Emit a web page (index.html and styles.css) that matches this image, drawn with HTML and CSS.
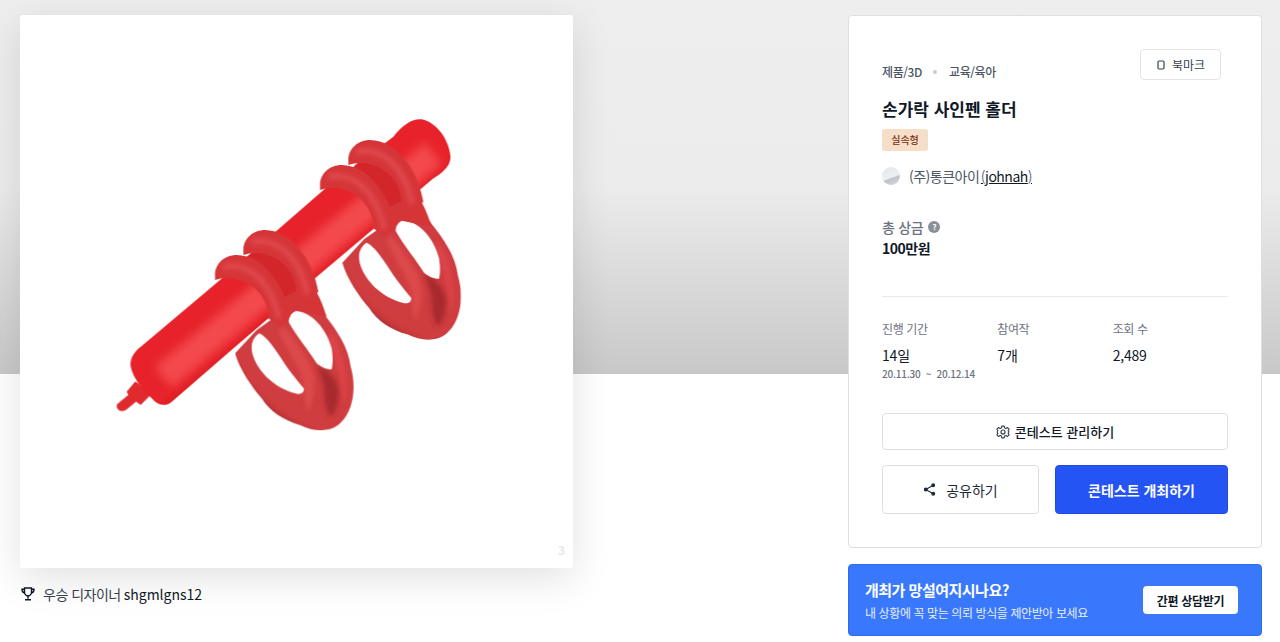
FILE: index.html
```html
<!DOCTYPE html>
<html lang="ko">
<head>
  <meta charset="UTF-8">
  <meta name="viewport" content="width=device-width, initial-scale=1.0">
  <title>손가락 사인펜 홀더</title>
  <link rel="stylesheet" href="styles.css">
</head>
<body>
  <div class="hero-bg"></div>

  <div class="container">
    <div class="left-col">
      <div class="cover">
        <svg class="cover-img" viewBox="0 0 553 553">
          <defs>
            <filter id="photo"><feGaussianBlur stdDeviation="1.2"/></filter>
            <filter id="soft"><feGaussianBlur stdDeviation="6"/></filter>
            <filter id="glow" x="-20%" y="-20%" width="140%" height="140%"><feGaussianBlur stdDeviation="14"/></filter>
            <clipPath id="loop-clip">
              <path clip-rule="evenodd" d="M540 640 C570 590 640 590 670 640 C710 690 745 740 752 800 C770 860 760 930 725 965 C700 995 650 1000 600 975 C550 960 510 935 485 895 C455 860 420 810 405 760 L470 690 Z M478 700 C500 710 520 740 540 770 C565 810 590 840 612 866 C612 880 600 885 585 880 C530 865 480 825 460 770 C450 740 455 715 478 700 Z M590 632 C640 640 680 690 695 745 C700 775 698 795 695 808 C675 808 662 800 650 790 C625 750 590 710 565 665 C565 650 575 635 590 632 Z"/>
            </clipPath>
            <clipPath id="barrel-clip">
              <path d="M92 800 C88 775 105 752 125 738 L360 540 L680 262 L880 110 C905 78 935 55 965 58 C1010 68 1045 115 1052 170 C1050 200 1030 215 1000 235 L650 530 L400 745 L215 905 C195 920 175 918 155 895 C125 865 100 835 92 800 Z"/>
            </clipPath>
            <g id="loop">
              <g clip-path="url(#loop-clip)">
                <rect x="380" y="580" width="400" height="430" fill="#cf3c3f"/>
                <path fill="#b23034" filter="url(#soft)" d="M400 770 C440 860 520 950 660 1000 L560 1000 L400 880 Z"/>
                <path fill="#dd484b" filter="url(#soft)" d="M555 680 C590 730 630 780 640 820 C650 860 640 900 625 935 C605 900 620 860 600 815 C575 770 550 730 535 690 Z"/>
                <path fill="#de4548" filter="url(#soft)" d="M690 690 C730 750 745 830 735 920 C725 860 715 780 680 720 Z"/>
                <path fill="#a82a2e" filter="url(#soft)" d="M650 795 C685 808 712 838 716 870 C718 910 705 945 690 950 C674 930 674 885 670 850 Z"/>
              </g>
            </g>
            <path id="ring" d="M345 525 C345 490 375 465 410 465 C450 465 490 490 515 525 C545 560 560 600 570 650 L540 680 L505 655 C505 610 480 570 440 548 C410 532 370 530 345 540 Z"/>
            <g id="rings">
              <path fill="none" stroke="#d3282c" stroke-width="70" d="M475 445 L585 578"/>
              <use href="#ring" fill="#d63639"/>
              <path fill="#d63639" d="M505 640 C525 600 600 560 640 560 C660 590 670 620 680 650 L590 632 C575 635 565 650 565 670 L540 660 Z"/>
              <use href="#ring" fill="#d63639" transform="translate(85 -75)"/>
              <path fill="none" stroke="#e04a4d" stroke-width="16" stroke-linecap="round" filter="url(#soft)" d="M375 500 C420 490 465 515 495 555 C515 585 530 620 535 650"/>
              <path fill="none" stroke="#e04a4d" stroke-width="16" stroke-linecap="round" filter="url(#soft)" d="M460 425 C505 415 550 440 580 480 C600 510 615 545 620 575"/>
            </g>
          </defs>
          <g transform="translate(80 85) scale(.33333)" filter="url(#photo)">
            <use href="#loop" transform="translate(322 -272)"/>
            <use href="#loop"/>

            <path fill="#e02a2e" d="M105 845 C120 850 140 870 152 885 L122 915 L108 905 L78 930 C60 940 45 925 52 912 L85 885 L80 875 Z"/>
            <g clip-path="url(#barrel-clip)">
              <rect x="60" y="30" width="1020" height="920" fill="#e7232a"/>
              <path fill="none" stroke="#f3494d" stroke-width="80" filter="url(#glow)" d="M190 832 L1000 160"/>
              <path fill="none" stroke="#d92226" stroke-width="14" filter="url(#soft)" d="M200 915 L1040 215"/>
            </g>

            <use href="#rings"/>
            <use href="#rings" transform="translate(315 -270)"/>
          </g>
        </svg>
        <span class="watermark">3</span>
      </div>
      <div class="winner">
        <svg class="trophy" viewBox="0 0 14 14" fill="none" stroke="#111827" stroke-width="1.4">
          <path d="M3.5 1h7v4.2a3.5 3.5 0 0 1-7 0z"/>
          <path d="M3.5 2.200H1c0 2.400 1 3.600 2.800 3.900M10.500 2.200H13c0 2.400-1 3.600-2.800 3.900M7 8.700v3M4 12.800h6"/>
        </svg>
        <span class="winner-label">우승 디자이너</span>
        <span class="winner-name">shgmlgns12</span>
      </div>
    </div>

    <div class="right-col">
      <div class="info-card">
        <div class="card-top">
          <div class="category">
            <span>제품/3D</span>
            <i class="dot"></i>
            <span>교육/육아</span>
          </div>
          <button class="bookmark-btn">
            <svg class="bookmark-icon" viewBox="0 0 10 10" fill="none" stroke="#374151" stroke-width="1.2">
              <path d="M2 2.200C2 1.300 2.600 1 3.200 1h3.600C7.500 1 8 1.300 8 2.200v5.600C8 8.700 7.500 9 6.800 9H3.200C2.500 9 2 8.700 2 7.800z"/>
            </svg>
            북마크
          </button>
        </div>

        <h1 class="title">손가락 사인펜 홀더</h1>
        <span class="badge">실속형</span>

        <div class="host">
          <span class="avatar"></span>
          <span>(주)통큰아이 <a class="host-link" href="#">(<span class="host-id">johnah</span>)</a></span>
        </div>

        <div class="prize">
          <div class="prize-label">총 상금 <span class="help">?</span></div>
          <div class="prize-value">100만원</div>
        </div>

        <div class="stats">
          <div class="stat">
            <div class="stat-label">진행 기간</div>
            <div class="stat-value">14일</div>
            <div class="stat-date">20.11.30 &nbsp;~&nbsp; 20.12.14</div>
          </div>
          <div class="stat">
            <div class="stat-label">참여작</div>
            <div class="stat-value">7개</div>
          </div>
          <div class="stat">
            <div class="stat-label">조회 수</div>
            <div class="stat-value">2,489</div>
          </div>
        </div>

        <button class="btn btn-manage">
          <svg class="gear" viewBox="0 0 24 24" fill="none" stroke="#374151" stroke-width="2">
            <circle cx="12" cy="12" r="3.500"/>
            <path d="M10 2h4l.7 3 2.300 1 2.700-1.600 2.800 2.800L20.900 9.900l1 2.100-1 2.100 1.600 2.700-2.800 2.800-2.700-1.600-2.300 1-.7 3h-4l-.7-3-2.300-1-2.700 1.600-2.800-2.800 1.600-2.700-1-2.100 1-2.100-1.600-2.700 2.800-2.800L7 6l2.300-1z" stroke-linejoin="round"/>
          </svg>
          콘테스트 관리하기
        </button>

        <div class="btn-row">
          <button class="btn btn-share">
            <svg class="share" viewBox="0 0 14 14" fill="#1f2937" stroke="#1f2937" stroke-width="1.2">
              <circle cx="11" cy="2.500" r="1.500"/>
              <circle cx="3" cy="7" r="1.500"/>
              <circle cx="11" cy="11.500" r="1.500"/>
              <path d="M11 2.500 3 7l8 4.500" fill="none"/>
            </svg>
            공유하기
          </button>
          <button class="btn btn-host">콘테스트 개최하기</button>
        </div>
      </div>

      <div class="consult">
        <div>
          <div class="consult-title">개최가 망설여지시나요?</div>
          <div class="consult-sub">내 상황에 꼭 맞는 의뢰 방식을 제안받아 보세요</div>
        </div>
        <button class="consult-btn">간편 상담받기</button>
      </div>
    </div>
  </div>
</body>
</html>
```

FILE: styles.css
```css
* {
  box-sizing: border-box;
}

html, body {
  height: 100%;
  overflow: hidden;
}

body {
  margin: 0;
  background: #ffffff;
  color: #111827;
  font-family: "Noto Sans CJK KR", "Noto Sans", sans-serif;
  font-size: 13px;
}

.hero-bg {
  position: absolute;
  top: 0;
  left: 0;
  width: 100%;
  height: 374px;
  background: linear-gradient(to bottom, #eeeeee 0, #ececec 50%, #c8c8c8 100%);
}

.container {
  position: relative;
  display: flex;
  justify-content: space-between;
  padding: 15px 18px 0 20px;
}

.left-col {
  width: 553px;
}

.cover {
  position: relative;
  width: 553px;
  height: 553px;
  background: #ffffff;
  border-radius: 3px;
  box-shadow: 0 10px 40px rgba(0, 0, 0, 0.12);
}

.cover-img {
  display: block;
  width: 100%;
  height: 100%;
}

.watermark {
  position: absolute;
  right: 8px;
  bottom: 10px;
  font-size: 12px;
  font-weight: 700;
  color: #e8e8e8;
}

.winner {
  display: flex;
  align-items: center;
  margin-top: 16px;
  padding-left: 1px;
  line-height: 20px;
  font-size: 14px;
}

.trophy {
  width: 14px;
  height: 14px;
  margin-right: 8px;
}

.winner-label {
  margin-right: 3px;
  color: #374151;
  letter-spacing: -0.5px;
}

.winner-name {
  color: #111827;
}

.right-col {
  width: 414px;
}

.info-card {
  height: 533px;
  padding: 33px 33px 0;
  background: #ffffff;
  border: 1px solid #dcdfe3;
  border-radius: 4px;
}

.card-top {
  display: flex;
  justify-content: space-between;
  align-items: flex-end;
  padding-right: 7px;
}

.category {
  display: flex;
  align-items: center;
  margin-bottom: -1px;
  font-size: 12px;
  font-weight: 500;
  line-height: 18px;
  letter-spacing: -0.4px;
  color: #4b5563;
}

.dot {
  width: 4px;
  height: 4px;
  margin: 0 12px 0 11px;
  border-radius: 50%;
  background: #c5cad3;
}

.bookmark-btn {
  display: flex;
  align-items: center;
  justify-content: center;
  gap: 6px;
  width: 81px;
  height: 31px;
  padding: 0;
  background: #ffffff;
  border: 1px solid #e2e4e8;
  border-radius: 4px;
  font: inherit;
  font-size: 12px;
  color: #374151;
}

.bookmark-icon {
  width: 10px;
  height: 10px;
}

.title {
  margin: 16px 0 0;
  font-size: 17px;
  font-weight: 700;
  line-height: 26px;
  color: #111827;
}

.badge {
  display: inline-block;
  margin-top: 7px;
  width: 46px;
  height: 22px;
  background: #f5dfc9;
  border-radius: 3px;
  text-align: center;
  font-size: 10px;
  font-weight: 500;
  line-height: 22px;
  color: #7c2d12;
}

.host {
  display: flex;
  align-items: center;
  gap: 9px;
  margin-top: 13px;
  font-size: 14px;
  line-height: 24px;
  letter-spacing: -0.5px;
  color: #4b5563;
}

.avatar {
  width: 18px;
  height: 18px;
  border-radius: 50%;
  background: linear-gradient(160deg, #e4e5e7 0, #eeeff0 55%, #bfc2c7 62%, #d8dadd 100%);
}

.host-link {
  margin-left: -2px;
  color: #6b7280;
  text-decoration: underline;
  text-decoration-color: #111827;
}

.host-id {
  color: #111827;
}

.prize {
  margin-top: 29px;
  padding-bottom: 37px;
  border-bottom: 1px solid #e8eaed;
}

.prize-label {
  display: flex;
  align-items: center;
  gap: 5px;
  font-size: 14px;
  font-weight: 500;
  line-height: 20px;
  letter-spacing: -0.3px;
  color: #6b7280;
}

.help {
  width: 12px;
  height: 12px;
  border-radius: 50%;
  background: #8b8f9a;
  color: #ffffff;
  font-size: 8px;
  font-weight: 700;
  line-height: 12px;
  text-align: center;
}

.prize-value {
  font-size: 14px;
  font-weight: 700;
  line-height: 22px;
  letter-spacing: -0.5px;
  color: #111827;
}

.stats {
  display: flex;
  margin-top: 22px;
  height: 94px;
}

.stat {
  width: 115.5px;
}

.stat-label {
  font-size: 12px;
  line-height: 20px;
  letter-spacing: -0.4px;
  color: #6b7280;
}

.stat-value {
  margin-top: 6px;
  font-size: 14px;
  line-height: 20px;
  letter-spacing: -0.2px;
  color: #111827;
}

.stat-date {
  margin-top: 1px;
  font-size: 10px;
  font-weight: 500;
  line-height: 16px;
  letter-spacing: -0.2px;
  color: #6b7280;
  white-space: nowrap;
}

.btn {
  display: flex;
  align-items: center;
  justify-content: center;
  padding: 0;
  background: #ffffff;
  border: 1px solid #dcdfe3;
  border-radius: 4px;
  font: inherit;
  color: #111827;
}

.btn-manage {
  gap: 5px;
  width: 100%;
  height: 37px;
  font-weight: 500;
}

.gear {
  width: 14px;
  height: 14px;
}

.btn-row {
  display: flex;
  gap: 16px;
  margin-top: 15px;
}

.btn-share {
  gap: 10px;
  width: 157px;
  height: 49px;
  font-size: 14px;
  color: #1f2937;
}

.share {
  width: 13px;
  height: 13px;
}

.btn-host {
  flex: 1;
  height: 49px;
  background: #2554f5;
  border-color: #1f4be0;
  font-size: 14px;
  font-weight: 700;
  color: #ffffff;
}

.consult {
  display: flex;
  justify-content: space-between;
  align-items: center;
  height: 72px;
  margin-top: 16px;
  padding: 0 23px 0 16px;
  background: #3a78fb;
  border: 1px solid #2a6cf0;
  border-radius: 4px;
  color: #ffffff;
}

.consult-title {
  font-size: 15px;
  font-weight: 700;
  line-height: 22px;
  letter-spacing: -0.5px;
}

.consult-sub {
  margin-top: 3px;
  font-size: 12px;
  line-height: 18px;
  letter-spacing: -0.4px;
  color: #e6eeff;
}

.consult-btn {
  width: 95px;
  height: 28px;
  padding: 0;
  background: #ffffff;
  border: 0;
  border-radius: 4px;
  font: inherit;
  font-size: 12px;
  font-weight: 700;
  letter-spacing: -0.3px;
  color: #111827;
}
```
